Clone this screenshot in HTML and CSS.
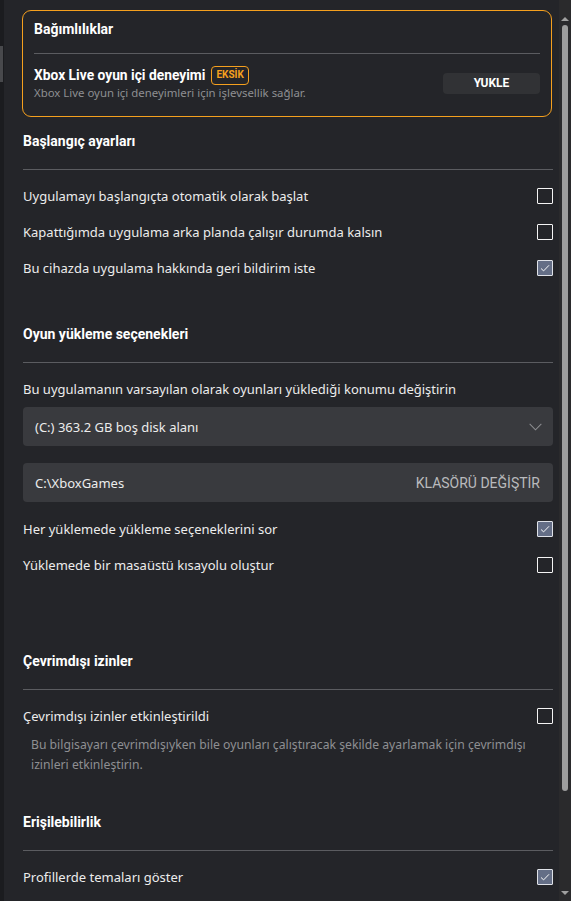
FILE: index.html
```html
<!DOCTYPE html>
<html lang="tr">
<head>
<meta charset="utf-8">
<title>Ayarlar</title>
<link rel="stylesheet" href="styles.css">
</head>
<body>
<div class="frame">
  <div class="rail"><div class="rail-mark"></div></div>
  <main class="content">
    <section class="card">
      <h2 class="card-title">Bağımlılıklar</h2>
      <div class="divider card-divider"></div>
      <div class="dep-row">
        <div class="dep-info">
          <div class="dep-name">Xbox Live oyun içi deneyimi <span class="badge">EKSİK</span></div>
          <div class="dep-desc">Xbox Live oyun içi deneyimleri için işlevsellik sağlar.</div>
        </div>
        <button class="install-btn">YUKLE</button>
      </div>
    </section>

    <section class="section first">
      <h2 class="section-title">Başlangıç ayarları</h2>
      <div class="divider"></div>
      <div class="row"><span>Uygulamayı başlangıçta otomatik olarak başlat</span><span class="check"></span></div>
      <div class="row"><span>Kapattığımda uygulama arka planda çalışır durumda kalsın</span><span class="check"></span></div>
      <div class="row"><span>Bu cihazda uygulama hakkında geri bildirim iste</span><span class="check on"><svg viewBox="0 0 16 16" width="14" height="14"><path d="M3.5 8.6 L6.4 11.3 L12.6 4.9" fill="none" stroke="#fff" stroke-width="1.1"/></svg></span></div>
    </section>

    <section class="section">
      <h2 class="section-title">Oyun yükleme seçenekleri</h2>
      <div class="divider"></div>
      <div class="row"><span>Bu uygulamanın varsayılan olarak oyunları yüklediği konumu değiştirin</span></div>
      <div class="field select">
        <span>(C:) 363.2 GB boş disk alanı</span>
        <svg class="chev" viewBox="0 0 14 8" width="13" height="8"><path d="M0.7 0.7 L7 7 L13.3 0.7" fill="none" stroke="#8d8e91" stroke-width="1.1"/></svg>
      </div>
      <div class="field path">
        <span>C:\XboxGames</span>
        <span class="folder-btn">KLASÖRÜ DEĞİŞTİR</span>
      </div>
      <div class="row"><span>Her yüklemede yükleme seçeneklerini sor</span><span class="check on"><svg viewBox="0 0 16 16" width="14" height="14"><path d="M3.5 8.6 L6.4 11.3 L12.6 4.9" fill="none" stroke="#fff" stroke-width="1.1"/></svg></span></div>
      <div class="row"><span>Yüklemede bir masaüstü kısayolu oluştur</span><span class="check"></span></div>
    </section>

    <section class="section spaced">
      <h2 class="section-title">Çevrimdışı izinler</h2>
      <div class="divider"></div>
      <div class="row"><span>Çevrimdışı izinler etkinleştirildi</span><span class="check"></span></div>
      <p class="note">Bu bilgisayarı çevrimdışıyken bile oyunları çalıştıracak şekilde ayarlamak için çevrimdışı izinleri etkinleştirin.</p>
    </section>

    <section class="section tight">
      <h2 class="section-title">Erişilebilirlik</h2>
      <div class="divider"></div>
      <div class="row"><span>Profillerde temaları göster</span><span class="check on"><svg viewBox="0 0 16 16" width="14" height="14"><path d="M3.5 8.6 L6.4 11.3 L12.6 4.9" fill="none" stroke="#fff" stroke-width="1.1"/></svg></span></div>
    </section>
  </main>
  <div class="scrollbar">
    <div class="arrow up"></div>
    <div class="thumb"></div>
    <div class="arrow down"></div>
  </div>
</div>
</body>
</html>
```

FILE: styles.css
```css
* { box-sizing: border-box; }
html, body { margin: 0; padding: 0; }
body {
  background: #242529;
  color: #ececec;
  font-family: "Noto Sans", "Open Sans", sans-serif;
  font-size: 13px;
  width: 571px;
  height: 901px;
  overflow: hidden;
}
.frame {
  display: flex;
  height: 901px;
}
.rail {
  width: 4px;
  flex: none;
  background: #1b1c1f;
  padding-top: 46px;
}
.rail-mark {
  width: 3px;
  height: 36px;
  background: #48494c;
}
.content {
  flex: 1;
  padding: 10px 6px 0 19px;
  overflow: hidden;
}
.card {
  border: 1px solid #f5a01e;
  border-radius: 9px;
  margin: 0 1px 0 -1px;
  padding: 8px 11px 16px 11px;
}
h2 {
  margin: 0;
  font-family: "Roboto", "Noto Sans", sans-serif;
  font-weight: 700;
  font-size: 14px;
  line-height: 20px;
  color: #fff;
}
.divider {
  height: 1px;
  background: #5b5c60;
  margin: 18px 0 8px;
}
.card-divider { margin: 14px 0 10px; }
.dep-row {
  display: flex;
  align-items: center;
  justify-content: space-between;
}
.dep-name {
  font-family: "Roboto", "Noto Sans", sans-serif;
  font-weight: 700;
  font-size: 13.8px;
  line-height: 22px;
  color: #fff;
  display: flex;
  align-items: center;
}
.badge {
  display: inline-flex;
  align-items: center;
  justify-content: center;
  height: 19px;
  margin-left: 6px;
  padding: 0 4px;
  border: 1px solid #f5a01e;
  border-radius: 4px;
  color: #f5a01e;
  font-size: 10px;
  font-weight: 700;
}
.dep-desc {
  color: #8e8f92;
  font-size: 11.4px;
  line-height: 14px;
}
.install-btn {
  width: 97px;
  height: 21px;
  margin-top: 2px;
  border: none;
  border-radius: 4px;
  background: #313235;
  color: #fff;
  font-family: "Roboto", sans-serif;
  font-weight: 700;
  font-size: 12px;
  padding: 0;
}
.section.first { margin-top: 14px; }
.section { margin-top: 38px; }
.section.spaced { margin-top: 68px; }
.section.tight { margin-top: 37px; }
.row {
  display: flex;
  align-items: center;
  justify-content: space-between;
  height: 36px;
  color: #ececec;
}
.check {
  width: 16px;
  height: 16px;
  border: 1.5px solid #f4f4f4;
  border-radius: 1px;
  flex: none;
  display: flex;
  align-items: center;
  justify-content: center;
}
.check.on {
  background: #646e86;
  border-color: #dfe2e8;
}
.field {
  display: flex;
  align-items: center;
  justify-content: space-between;
  height: 39px;
  background: #393a3e;
  border-radius: 4px;
  padding: 0 11px 0 12px;
}
.path { margin-top: 17px; margin-bottom: 9px; padding-right: 13px; }
.chev { margin-top: 1px; }
.folder-btn {
  color: #b9babd;
  font-family: "Roboto", sans-serif;
  font-size: 14px;
}
.note {
  margin: 1px 0 0;
  padding: 0 20px 0 8px;
  color: #8e8f92;
  font-size: 12.2px;
  line-height: 20px;
}
.scrollbar {
  width: 12px;
  flex: none;
  background: #2a2a2c;
  display: flex;
  flex-direction: column;
  align-items: center;
  padding: 17px 0 6px;
}
.arrow {
  width: 0; height: 0;
  border-left: 4px solid transparent;
  border-right: 4px solid transparent;
}
.arrow.up { border-bottom: 4px solid #a0a0a0; }
.arrow.down { border-top: 4px solid #a0a0a0; margin-top: auto; }
.thumb {
  width: 6px;
  height: 766px;
  margin-top: 4px;
  background: #9d9d9d;
  border-radius: 3px;
}
```
